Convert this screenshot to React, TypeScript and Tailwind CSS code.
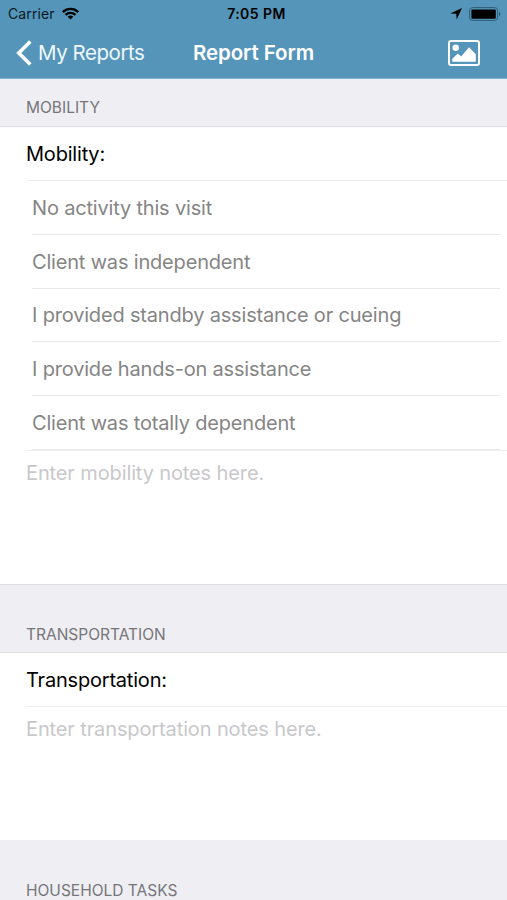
import { useState } from "react";

const mobilityOptions = [
    "No activity this visit",
    "Client was independent",
    "I provided standby assistance or cueing",
    "I provide hands-on assistance",
    "Client was totally dependent",
];

const StatusBar = () => (
    <div className="flex h-[27px] items-center text-[14px] text-[#0a1a24]">
        <div className="flex flex-1 items-center gap-[7px] pl-2">
            <span className="tracking-[0.1px]">Carrier</span>
            <svg width="17" height="13" viewBox="0 0 17 13" fill="none" stroke="#000" strokeWidth="2.3">
                <path d="M0.8 5.1a11 11 0 0 1 15.4 0" />
                <path d="M3.5 7.8a7.2 7.2 0 0 1 10 0" />
                <path d="M8.5 12.6 5.7 9.8a4 4 0 0 1 5.6 0z" fill="#000" stroke="none" />
            </svg>
        </div>
        <span className="ml-[4px] font-semibold tracking-[0.45px] text-black">7:05 PM</span>
        <div className="flex flex-1 items-center justify-end gap-[7px] pr-[6px]">
            <svg width="12" height="12" viewBox="0 0 12 12">
                <path d="M12 0 6.7 11.6 6.2 5.8 0.3 5.4z" fill="#000" />
            </svg>
            <svg width="32" height="14" viewBox="0 0 32 14">
                <rect x="0.6" y="0.6" width="28" height="12.8" rx="3" fill="none" stroke="#2c5e79" />
                <rect x="2.4" y="2.4" width="24.4" height="9.4" rx="1.2" fill="#000" />
                <path d="M30 4.8c1.8.6 1.8 3.8 0 4.4z" fill="#2c5e79" />
            </svg>
        </div>
    </div>
);

const NavBar = () => (
    <nav className="grid h-[51px] grid-cols-[1fr_auto_1fr] items-center text-white">
        <button className="flex items-center gap-[6px] pl-[16px] text-[20.5px] text-[#eef8ff]">
            <svg width="16" height="26" viewBox="0 0 16 26" fill="none" stroke="#fff" strokeWidth="3.6">
                <path d="M14.3 1.5 2.8 13l11.5 11.5" />
            </svg>
            <span className="mt-[2px] whitespace-nowrap tracking-[-0.45px]">My Reports</span>
        </button>
        <h1 className="mt-[2px] text-[20.5px] font-semibold tracking-[-0.1px]">Report Form</h1>
        <div className="flex justify-end pr-[27px]">
            <button aria-label="Add photo">
                <svg width="32" height="26" viewBox="0 0 32 26">
                    <rect x="1" y="1" width="30" height="24" rx="2" fill="none" stroke="#fff" strokeWidth="2" />
                    <circle cx="7.7" cy="7.8" r="3.2" fill="#fff" />
                    <path d="M4.3 21.8v-3l5.5-5.4 3.3 3.2 8-9.3 6.7 7v7.5z" fill="#fff" />
                </svg>
            </button>
        </div>
    </nav>
);

const SectionHeader = ({ title, className }: { title: string; className: string }) => (
    <h2 className={`flex shrink-0 items-end border-b border-[#dfdfe3] bg-[#efeef3] pl-[26px] text-[15.5px] leading-5 text-[#75757a] ${className}`}>
        {title}
    </h2>
);

const RowTitle = ({ text }: { text: string }) => (
    <div className="ml-[26px] flex h-[54px] shrink-0 items-center border-b border-[#eeeeee] pt-px text-[20px] tracking-[-0.2px] text-black">
        {text}
    </div>
);

const Notes = ({ placeholder, className }: { placeholder: string; className: string }) => {
    const [value, setValue] = useState("");

    return (
        <div className={`ml-[26px] shrink-0 ${className}`}>
            <textarea
                className="block h-full w-full resize-none bg-white pt-[8px] text-[20px] leading-7 tracking-[-0.12px] text-black placeholder:text-[#c8c8cb] focus:outline-none"
                placeholder={placeholder}
                value={value}
                onChange={(e) => setValue(e.target.value)}
            />
        </div>
    );
};

export default function App() {
    return (
        <div className="flex h-[900px] w-full flex-col overflow-hidden bg-white font-['Inter',sans-serif]">
            <header className="h-[79px] shrink-0 border-b border-[#7fb2cf] bg-[#5495b9]">
                <StatusBar />
                <NavBar />
            </header>

            <SectionHeader title="MOBILITY" className="h-[48px] pb-[8px]" />
            <RowTitle text="Mobility:" />
            <ul className="ml-[32px] mr-[7px] shrink-0 text-[20px] tracking-[-0.18px] text-[#858585]">
                {mobilityOptions.map((option) => (
                    <li key={option} className="flex h-[53.8px] items-center border-b border-[#e9e9e9] pt-px">
                        {option}
                    </li>
                ))}
            </ul>
            <Notes placeholder="Enter mobility notes here." className="h-[134px] border-t border-[#eeeeee]" />

            <SectionHeader title="TRANSPORTATION" className="h-[69px] border-t pb-[7px]" />
            <RowTitle text="Transportation:" />
            <Notes placeholder="Enter transportation notes here." className="h-[133px]" />

            <SectionHeader title="HOUSEHOLD TASKS" className="h-[68px] pb-[6px]" />
        </div>
    );
}
